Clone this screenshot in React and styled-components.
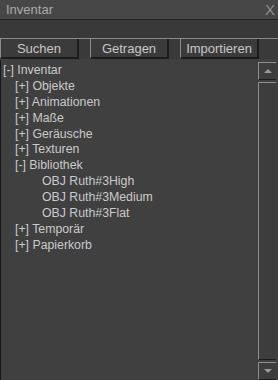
import React from 'react';
import styled, { createGlobalStyle } from 'styled-components';

const Global = createGlobalStyle`
  html, body {
    margin: 0;
    padding: 0;
    background: #404040;
  }
  body {
    font-family: "Liberation Sans", Arial, sans-serif;
  }
`;

const Panel = styled.div`
  width: 278px;
  height: 380px;
  display: flex;
  flex-direction: column;
  background: #404040;
  overflow: hidden;
`;

const TitleBar = styled.div`
  height: 19px;
  display: flex;
  align-items: center;
  justify-content: space-between;
  padding: 0 3px 0 6px;
  background: #474747;
  color: #aaaaaa;
  font-size: 13px;
  box-sizing: border-box;
`;

const Close = styled.span`
  font-size: 15px;
  line-height: 15px;
  color: #8e8e8e;
`;

const SearchField = styled.div`
  height: 18px;
  background: #393939;
  border-top: 1px solid #1f1f1f;
`;

const ButtonRow = styled.div`
  display: flex;
  gap: 11px;
  height: 21px;
  border-top: 1px solid #8a8a8a;
  background: #3a3a3a;
  box-sizing: border-box;
`;

const TabButton = styled.div`
  width: 79px;
  box-sizing: border-box;
  display: flex;
  align-items: center;
  justify-content: center;
  color: #c8c8c8;
  font-size: 13px;
  background: #3b3b3b;
  border-left: 1px solid #8a8a8a;
  border-right: 2px solid #1c1c1c;
  border-bottom: 2px solid #1c1c1c;
`;

const Body = styled.div`
  flex: 1;
  display: flex;
  border-left: 1px solid #1a1a1a;
  margin-top: 1px;
`;

const Tree = styled.ul`
  flex: 1;
  list-style: none;
  margin: 0;
  padding: 3px 0 0 2px;
`;

const Node = styled.li`
  height: 15.9px;
  line-height: 15.9px;
  padding-left: ${p => p.$level * 12 + (p.$leaf ? 15 : 0)}px;
  color: #cacaca;
  font-size: 12.3px;
  white-space: nowrap;
`;

const ScrollBar = styled.div`
  width: 18px;
  margin-right: 2px;
  margin-top: 2px;
  display: flex;
  flex-direction: column;
  gap: 2px;
`;

const ScrollButton = styled.div`
  height: 18px;
  box-sizing: border-box;
  display: flex;
  align-items: center;
  justify-content: center;
  background: #3d3d3d;
  border-top: 1px solid #8f8f8f;
  border-left: 1px solid #8f8f8f;
  border-bottom: 1px solid #1c1c1c;
`;

const Track = styled.div`
  flex: 1;
  box-sizing: border-box;
  background: #3d3d3d;
  border-top: 1px solid #8f8f8f;
  border-left: 1px solid #8f8f8f;
  border-bottom: 1px solid #1c1c1c;
`;

const Arrow = ({ down }) => (
  <svg width="8" height="5" viewBox="0 0 8 5">
    <path d={down ? 'M0 0 H8 L4 4 Z' : 'M0 4 H8 L4 0 Z'} fill="#9a9a9a" />
  </svg>
);

const items = [
  { label: '[-] Inventar', level: 0 },
  { label: '[+] Objekte', level: 1 },
  { label: '[+] Animationen', level: 1 },
  { label: '[+] Maße', level: 1 },
  { label: '[+] Geräusche', level: 1 },
  { label: '[+] Texturen', level: 1 },
  { label: '[-] Bibliothek', level: 1 },
  { label: 'OBJ Ruth#3High', level: 2, leaf: true },
  { label: 'OBJ Ruth#3Medium', level: 2, leaf: true },
  { label: 'OBJ Ruth#3Flat', level: 2, leaf: true },
  { label: '[+] Temporär', level: 1 },
  { label: '[+] Papierkorb', level: 1 },
];

const App = () => (
  <>
    <Global />
    <Panel>
      <TitleBar>
        <span>Inventar</span>
        <Close>X</Close>
      </TitleBar>
      <SearchField />
      <ButtonRow>
        <TabButton>Suchen</TabButton>
        <TabButton>Getragen</TabButton>
        <TabButton>Importieren</TabButton>
      </ButtonRow>
      <Body>
        <Tree>
          {items.map(it => (
            <Node key={it.label} $level={it.level} $leaf={it.leaf}>
              {it.label}
            </Node>
          ))}
        </Tree>
        <ScrollBar>
          <ScrollButton><Arrow /></ScrollButton>
          <Track />
          <ScrollButton><Arrow down /></ScrollButton>
        </ScrollBar>
      </Body>
    </Panel>
  </>
);

export default App;
